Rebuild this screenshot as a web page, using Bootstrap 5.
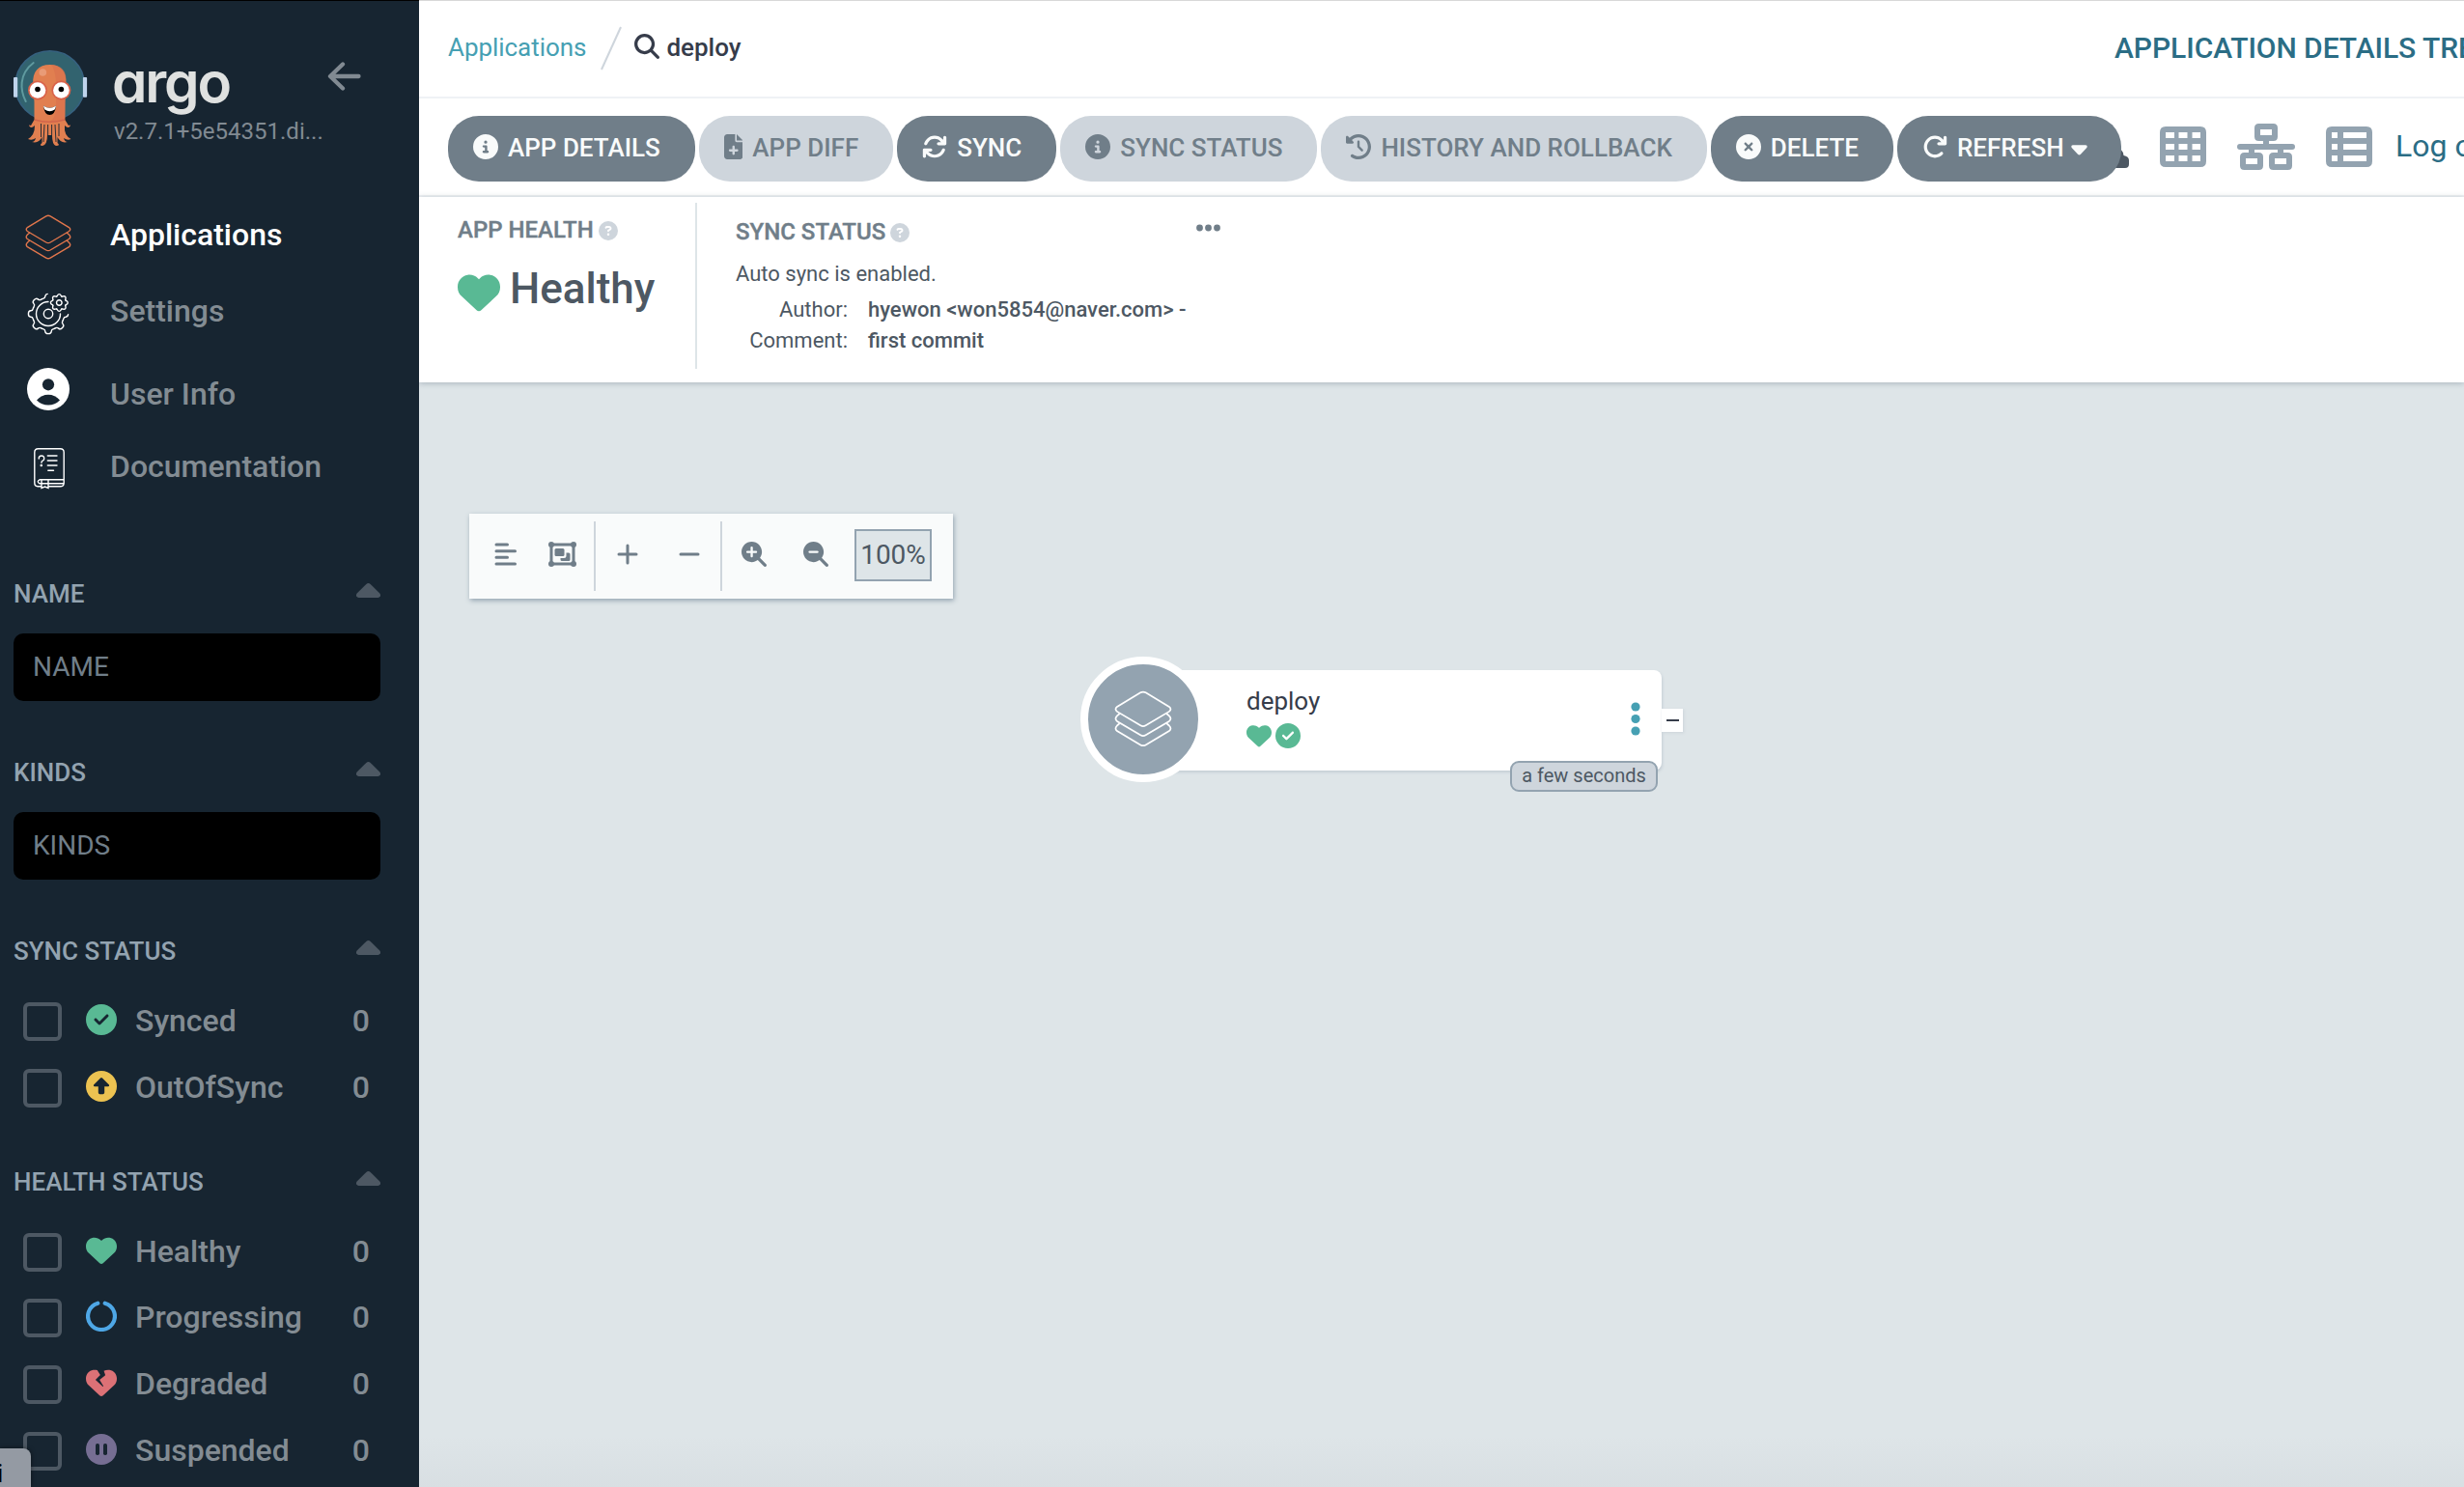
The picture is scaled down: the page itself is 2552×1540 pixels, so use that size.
<!DOCTYPE html>
<html lang="en">
<head>
<meta charset="utf-8">
<title>deploy - Argo CD</title>
<link href="https://cdn.jsdelivr.net/npm/bootstrap@5.3.0/dist/css/bootstrap.min.css" rel="stylesheet">
<style>
  body { font-family: Roboto, "Liberation Sans", sans-serif; font-size: 26px; color: #4d5863; background: #dee5e8; height: 1540px; overflow: hidden; }
  svg { display: block; flex: none; }

  /* sidebar */
  .side { width: 434px; height: 1540px; background: #172531; border-top: 1px solid #000; overflow: hidden; padding: 49px 40px 0 14px; }
  .brand-row { height: 154px; }
  .octo { margin-left: -1px; }
  .wordmark { font: 600 58.5px/60px Inter, sans-serif; font-feature-settings: "cv11" 1; letter-spacing: -2.2px; color: #dfe1e0; height: 60px; margin: 5px 0 0 25px; }
  .ver { font-size: 24px; line-height: 28px; color: #818a92; margin: 7px 0 0 27px; }
  .back { margin: 14px 0 0 4px; }
  .navi { font-size: 32px; font-weight: 500; line-height: 40px; color: #838c93; }
  .navi svg { margin-left: 12px; margin-right: 40px; }
  .navi.on { color: #fff; }
  .n1 { height: 79px; padding-bottom: 2px; } .n2 { height: 78px; } .n3 { height: 94px; } .n4 { height: 56px; padding-bottom: 1px; }
  .n1 svg { margin-top: 7px; } .n2 svg { margin-top: 6px; } .n3 svg { margin-top: -11px; } .n4 svg { margin-top: 5px; }
  .fspace { height: 84px; }
  .fhead { height: 40px; line-height: 40px; font-size: 26px; font-weight: 500; color: #93a3b0; }
  .fhead svg { margin-top: -7px; }
  .finput { height: 70px; border: 0; border-radius: 10px; background: #000; color: #707e89; font-size: 28px; line-height: 70px; padding: 0 20px; margin: 21px 0 54px; }
  .finput::placeholder { color: #707e89; opacity: 1; }
  .finput:focus { background: #000; color: #707e89; }
  .frow { height: 68px; font-size: 32px; font-weight: 500; color: #838c93; padding: 0 11px 2px 10px; }
  .frow .form-check-input { width: 40px; height: 40px; margin: 2px 0 0; border: 4px solid #4d5863; border-radius: 6px; background: transparent; flex: none; }
  .frow svg { margin: -2px 19px 0 25px; }
  .frow + .frow { margin-top: 1px; }
  .frow.tight { margin-top: 0; }
  .fhead + .frow { margin-top: 19px; }
  .frow + .fhead { margin-top: 43px; }

  /* top bars */
  .main { width: 2118px; height: 1540px; overflow: hidden; }
  .bar1 { height: 102px; background: #fff; border-top: 1px solid #d8d8d8; border-bottom: 2px solid #eff2f5; padding-left: 30px; }
  .crumbs { width: 1726px; flex: none; padding-bottom: 2px; }
  .crumbs a { color: #46a0b3; text-decoration: none; letter-spacing: -.05px; }
  .crumbs strong { font-weight: 500; color: #363c4a; }
  .slash { margin-left: 15px; }
  .find { margin: -4px 7px 0 13px; }
  .ttl { font-size: 30px; font-weight: 500; color: #2b6d85; white-space: nowrap; margin-top: -2px; letter-spacing: -.05px; }
  .bar2 { height: 102px; background: #fff; border-bottom: 2px solid #eff2f5; padding: 18px 0 0 30px; gap: 4px; }
  .pill { height: 68px; border-radius: 32px; border: 0; padding: 0 36px 2px 26px; font-size: 26px; font-weight: 500; background: #707e89; color: #f9fbfb; flex: none; gap: 10px; display: flex; align-items: center; white-space: nowrap; line-height: 66px; }
  .pill:disabled { background: #ced5dc; color: #707e89; opacity: 1; }
  .pill svg { margin-top: -2px; }
  .pill.front { z-index: 1; position: relative; padding-right: 36px; width: 232px; }
  .pill .caret { margin: 4px 0 0 -3px; }
  .views { gap: 32px; margin: -2px 0 0 -4px; height: 68px; }
  .views .who { margin: 15px 0 0 -34px; align-self: flex-start; }
  .logout { font-size: 32px; color: #2b6d85; text-decoration: none; white-space: nowrap; margin: -3px 0 0 -8px; }

  /* status panel */
  .status { height: 192px; background: #fff; box-shadow: 0 1px 6px rgba(70,90,105,.35); padding: 6px 0 0 40px; position: relative; z-index: 1; }
  .cap { font-size: 24px; font-weight: 500; line-height: 28px; color: #707e89; -webkit-text-stroke: .4px #707e89; gap: 5px; }
  .cap svg { margin-top: 2px; }
  .health { width: 248px; height: 172px; border-right: 2px solid #dee5e8; padding-top: 14px; }
  .big { font-size: 44px; font-weight: 500; line-height: 52px; gap: 10px; margin-top: 21px; }
  .big svg { margin-top: 8px; }
  .sync { width: 542px; padding: 16px 0 0 40px; font-size: 22px; line-height: 26px; }
  .sync b { font-weight: 500; }
  .sync .more { margin-top: -8px; }
  .auto { margin-top: 17px; }
  .author { margin-top: 11px; }
  .comment { margin-top: 6px; }
  .lbl { width: 116px; flex: none; text-align: right; margin-right: 21px; }

  /* resource graph */
  .graph { height: 1144px; position: relative; background: linear-gradient(to bottom, rgba(60,60,80,0) 1090px, rgba(60,60,80,.035)) #dee5e8; padding: 136px 0 0 52px; }
  .tools { width: 501px; height: 88px; background: #f9fbfb; box-shadow: 1px 2px 5px #93a3b0; color: #707e89; padding-left: 26px; }
  .tools svg { margin-top: -4px; }
  .vline { width: 2px; height: 72px; background: #ced5dc; }
  .zoomv { width: 80px; height: 54px; margin: -2px 0 0 27px; border: 2px solid #93a3b0; background: #dee5e8; font-size: 28px; line-height: 50px; color: #4d5863; }
  .nodebox { position: absolute; left: 750px; top: 298px; width: 537px; height: 104px; background: #fff; border-radius: 8px; box-shadow: 1px 2px 3px #c6cfd6; }
  .kind { position: absolute; left: -65px; top: -14px; width: 130px; height: 130px; border: 8px solid #fff; border-radius: 50%; background: #93a3b0; color: #fff; }
  .nname { padding: 15px 0 0 107px; line-height: 34px; color: #363c4a; }
  .nstat { padding: 6px 0 0 107px; gap: 4px; color: #59b994; }
  .dots { position: absolute; right: 22px; top: 33px; }
  .fold { position: absolute; left: 537px; top: 40px; width: 22px; height: 24px; background: #fff; box-shadow: 1px 1px 3px #ccd4da; }
  .fold span { width: 13px; height: 2px; background: #363c4a; }
  .age { position: absolute; right: 4px; top: 94px; width: 153px; height: 32px; border: 2px solid #93a3b0; border-radius: 9px; background: #ced5dc; font-size: 20px; line-height: 26px; text-align: center; color: #4d5863; white-space: nowrap; }
  .hint { position: absolute; left: 0; top: 1500px; width: 32px; height: 40px; background: #949aa3; border-top-right-radius: 8px; color: #000; font-size: 26px; line-height: 52px; overflow: hidden; box-shadow: 0 0 5px rgba(0,0,0,.5); }
  .hint span { margin-left: -3px; }
</style>
<script src="https://cdn.jsdelivr.net/npm/bootstrap@5.3.0/dist/js/bootstrap.bundle.min.js"></script>
</head>
<body>
<svg width="0" height="0" class="position-absolute">
  <defs>
    <symbol id="layers" viewBox="-1 -1 48.5 48.5"><g fill="none" stroke="currentColor" stroke-width="1.4" stroke-linecap="round"><path d="M21 .9Q23.2-.4 25.400 .9L45 12.700Q47.500 14.700 45 16.700L25.400 28.300Q23.200 29.600 21 28.300L1.400 16.700Q-1 14.700 1.400 12.700Z"/><path d="M3.600 18.400L1.400 20.300Q-1 22.800 1.400 24.800L21 36.400Q23.200 37.700 25.400 36.400L45 24.800Q47.500 22.800 45 20.300L42.800 18.400"/><path d="M3.600 26.600L1.400 28.500Q-1 31 1.400 33L21 44.600Q23.200 45.900 25.400 44.600L45 33Q47.500 31 45 28.500L42.800 26.600"/></g></symbol>
    <symbol id="info" viewBox="0 0 512 512"><path fill="currentColor" d="M256 512A256 256 0 1 0 256 0a256 256 0 1 0 0 512zM216 336h24V272H216c-13.300 0-24-10.700-24-24s10.700-24 24-24h48c13.300 0 24 10.700 24 24v88h8c13.300 0 24 10.700 24 24s-10.700 24-24 24H216c-13.300 0-24-10.700-24-24s10.700-24 24-24zm40-208a32 32 0 1 1 0 64 32 32 0 1 1 0-64z"/></symbol>
    <symbol id="check" viewBox="0 0 512 512"><path fill="currentColor" d="M256 512A256 256 0 1 0 256 0a256 256 0 1 0 0 512zM369 209L241 337c-9.400 9.400-24.600 9.400-33.900 0l-64-64c-9.400-9.400-9.400-24.600 0-33.900s24.600-9.400 33.900 0l47 47L335 175c9.400-9.400 24.600-9.400 33.900 0s9.400 24.600 0 33.900z"/></symbol>
    <symbol id="heart" viewBox="0 0 512 512"><path fill="currentColor" d="M47.600 300.400L228.300 469.100c7.500 7 17.400 10.900 27.700 10.900s20.200-3.900 27.700-10.900L464.400 300.400c30.400-28.300 47.600-68 47.600-109.500v-5.800c0-69.900-50.500-129.500-119.400-141C347 36.500 300.600 51.400 268 84L256 96 244 84c-32.600-32.600-79-47.500-124.600-39.900C50.500 55.600 0 115.200 0 185.100v5.800c0 41.500 17.200 81.200 47.600 109.500z"/></symbol>
    <symbol id="quest" viewBox="0 0 512 512"><circle cx="256" cy="256" r="256" fill="#ced5dc"/><path fill="#fff" d="M169.800 165.300c7.900-22.300 29.100-37.300 52.800-37.300h58.300c34.900 0 63.100 28.300 63.100 63.100c0 22.600-12.100 43.500-31.700 54.800L280 264.400c-.2 13-10.900 23.600-24 23.600c-13.300 0-24-10.700-24-24V250.500c0-8.600 4.600-16.500 12.100-20.800l44.300-25.400c4.700-2.700 7.600-7.700 7.600-13.100c0-8.400-6.800-15.100-15.100-15.100H222.600c-3.400 0-6.400 2.100-7.500 5.300l-.4 1.200c-4.400 12.500-18.200 19-30.600 14.600s-19-18.200-14.600-30.600l.4-1.200zM224 352a32 32 0 1 1 64 0 32 32 0 1 1-64 0z"/></symbol>
    <symbol id="up" viewBox="0 0 25 15"><path fill="#4d5863" d="M10.300 1.100Q12.500-.9 14.700 1.100L24.300 10.600Q25.500 12.200 24.800 13.600Q24 15 22.500 15H2.500Q1 15 .2 13.600Q-.5 12.200 .7 10.600Z"/></symbol>
    <symbol id="lens" viewBox="0 0 512 512"><path fill="currentColor" d="M416 208c0 45.900-14.900 88.300-40 122.700L502.600 457.400c12.500 12.500 12.500 32.800 0 45.300s-32.800 12.500-45.300 0L330.700 376c-34.400 25.200-76.800 40-122.700 40C93.100 416 0 322.900 0 208S93.100 0 208 0S416 93.100 416 208z"/></symbol>
    <path id="tooth" d="M-6.300-15.400C-4.600-16.300-3.300-15.500-3.200-18.200C-3.100-21.400 3.100-21.400 3.200-18.200C3.300-15.500 4.600-16.300 6.300-15.400"/>
    <path id="cog" d="M-2.700-6.500C-1.600-6.900-1.900-8.900 0-8.900S1.600-6.900 2.700-6.500"/>
  </defs>
</svg>
<div class="d-flex">
  <aside class="side flex-shrink-0">
    <div class="brand-row d-flex align-items-start">
      <svg class="octo" width="78" height="102" viewBox="0 0 78 102">
        <circle cx="38.700" cy="38.500" r="35.800" fill="#32636f" stroke="#36617f" stroke-width="1.600"/>
        <path d="M21.700 15C6 27 8 44 13.700 55" fill="none" stroke="#5f9a9f" stroke-width="2" stroke-linecap="round"/>
        <path d="M21.300 37C20.300 24 27 17 38.500 17S56.300 24 55.300 37L54.300 56V74L58 80Q60 79 60 80Q58 84 54 80Q53 90 60.500 94Q57 96 53 93Q54 97 57 97Q50 99 46.500 92V98Q50 101 45 101Q41 100 41 90H36Q36 100 31 101Q27 101 30.500 98V92Q27 99 20 97Q23 97 24 93Q20 96 16 94Q23 90 23 80Q19 84 17 80Q17 79 19 80L22.500 74V56Z" fill="#e17f50"/>
        <path d="M40 17C55 18 56.300 28 55.300 37L54.300 74Q46 77 38 76Q45 73 45 60V40Q45 22 40 17Z" fill="#d96f4c" opacity=".55"/>
        <path d="M23 74Q38 78.500 54 74" fill="none" stroke="#d2654b" stroke-width="1.500"/>
        <path d="M29.500 78V92M33 79L32 97M44 79L45 97M48 78V91M36.600 79V90M40.600 79V90" stroke="#172531" stroke-width=".9"/>
        <circle cx="31.300" cy="25" r="3.800" fill="#e99b77"/>
        <circle cx="26" cy="43.500" r="10" fill="#d9624a"/><circle cx="50.400" cy="43.500" r="10" fill="#d9624a"/>
        <circle cx="26" cy="43.500" r="8.300" fill="#fff"/><circle cx="50.400" cy="43.500" r="8.300" fill="#fff"/>
        <circle cx="26" cy="42.500" r="2.800"/><circle cx="50.400" cy="42.500" r="2.800"/>
        <path d="M32 59.500Q38.500 64 45 59.500Q44 69 38.500 69T32 59.500Z"/><path d="M32 59.500Q38.500 64 45 59.500Q44.500 62 43.600 63.500Q38.500 67 33.400 63.500Q32.500 62 32 59.500Z" fill="#fff"/>
        <rect x="1" y="30" width="4.200" height="20.700" rx="1" fill="#bfd4ec"/><rect x="72.900" y="30" width="4.200" height="20.700" rx="1" fill="#bfd4ec"/>
      </svg>
      <div>
        <div class="wordmark">argo</div>
        <div class="ver">v2.7.1+5e54351.di...</div>
      </div>
      <svg class="back" width="36" height="30" viewBox="0 0 36 30"><path d="M16 2.500L3 15L16 27.500M4 15H32.500" fill="none" stroke="#818a92" stroke-width="4.300" stroke-linecap="round" stroke-linejoin="round"/></svg>
    </div>
    <nav>
      <div class="navi on n1 d-flex align-items-center"><svg width="48" height="48" color="#e1764c"><use href="#layers"/></svg>Applications</div>
      <div class="navi n2 d-flex align-items-center">
        <svg width="48" height="48" viewBox="-24 -24 48 48"><g fill="none" stroke="#fff" stroke-width="1.400" stroke-linecap="round">
          <use href="#tooth" transform="rotate(135)"/><use href="#tooth" transform="rotate(180)"/><use href="#tooth" transform="rotate(225)"/><use href="#tooth" transform="rotate(270)"/><use href="#tooth" transform="rotate(315)"/>
          <path d="M-6.300-15.400C-4.600-16.300-3.300-15.500-3.200-18.200Q-2.600-20.400-.8-20.600"/><path d="M15.400 6.300C16.300 4.600 15.500 3.300 18.200 3.200Q20.400 2.600 20.600 .8"/>
          <path d="M0-12.500A12.500 12.500 0 1 0 12.500 0"/><circle r="4.700"/>
          <g transform="translate(11.300 -11.500)"><use href="#cog"/><use href="#cog" transform="rotate(45)"/><use href="#cog" transform="rotate(90)"/><use href="#cog" transform="rotate(135)"/><use href="#cog" transform="rotate(180)"/><use href="#cog" transform="rotate(225)"/><use href="#cog" transform="rotate(270)"/><use href="#cog" transform="rotate(315)"/><circle r="2.800"/></g>
        </g></svg>Settings</div>
      <div class="navi n3 d-flex align-items-center">
        <svg width="48" height="48" viewBox="-24 -24 48 48"><circle r="22" fill="#fff"/><circle cy="-4.700" r="6.100" fill="#172531"/><path d="M-12 11.500Q-7 5.700 0 5.700T12 11.500Q7 16.500 0 16.500T-12 11.500Z" fill="#172531"/></svg>User Info</div>
      <div class="navi n4 d-flex align-items-center">
        <svg width="48" height="48" viewBox="-24 -24 48 48"><g fill="none" stroke="#fff" stroke-width="1.400" stroke-linecap="round"><path d="M-7.500 18.800H-11Q-14.200 18.600-14.200 15V-16.500Q-14.200-20.300-10.500-20.300H12.500Q16.200-20.300 16.200-16.500V15.500Q16 18.800 12.500 18.800H.5M16 11.800H-9Q-12.500 13.500-9 15.800H15.500M-7 12V20.500L-3.500 19L0 20.500V12"/><path d="M-.7-13H9M-.7-8H9M-.7-3H9M-.2 2.200H5.500M-9.800-10Q-9.800-13-7-13T-4.300-10Q-4.300-8.500-5.800-7.800T-7-5.800"/></g><circle cx="-7.200" cy="-3" r="1.300" fill="#fff"/></svg>Documentation</div>
    </nav>
    <div class="fspace"></div>
    <div class="fhead d-flex justify-content-between align-items-center">NAME<svg width="25" height="15"><use href="#up"/></svg></div>
    <input class="finput form-control" placeholder="NAME">
    <div class="fhead d-flex justify-content-between align-items-center">KINDS<svg width="25" height="15"><use href="#up"/></svg></div>
    <input class="finput form-control" placeholder="KINDS">
    <div class="fhead d-flex justify-content-between align-items-center">SYNC STATUS<svg width="25" height="15"><use href="#up"/></svg></div>
    <div class="frow d-flex align-items-center"><input type="checkbox" class="form-check-input"><svg width="32" height="32" color="#59b994"><use href="#check"/></svg>Synced<span class="ms-auto">0</span></div>
    <div class="frow d-flex align-items-center"><input type="checkbox" class="form-check-input"><svg width="32" height="32" viewBox="0 0 32 32"><circle cx="16" cy="16" r="16" fill="#ecc251"/><path fill="#172531" d="M15 7.500Q16 6.600 17 7.500L24 14.500Q24.600 16 23 16.300H19.200V22.500Q19.100 24.300 17.500 24.300H14.500Q12.900 24.300 12.800 22.500V16.300H9Q7.400 16 8 14.500Z"/></svg>OutOfSync<span class="ms-auto">0</span></div>
    <div class="fhead d-flex justify-content-between align-items-center">HEALTH STATUS<svg width="25" height="15"><use href="#up"/></svg></div>
    <div class="frow d-flex align-items-center"><input type="checkbox" class="form-check-input"><svg width="32" height="32" color="#59b994"><use href="#heart"/></svg>Healthy<span class="ms-auto">0</span></div>
    <div class="frow tight d-flex align-items-center"><input type="checkbox" class="form-check-input"><svg width="32" height="32" viewBox="0 0 32 32"><path d="M19.700 2.700A13.900 13.900 0 1 1 12.300 2.700" fill="none" stroke="#4ea7e6" stroke-width="4.200" stroke-linecap="round"/></svg>Progressing<span class="ms-auto">0</span></div>
    <div class="frow d-flex align-items-center"><input type="checkbox" class="form-check-input"><svg width="32" height="32" viewBox="0 0 512 512"><path fill="#dc7176" d="M119.400 44.100c23.300-3.900 46.800-1.900 68.600 5.300l49.800 77.500-75.400 75.400c-1.500 1.500-2.400 3.600-2.300 5.800s1 4.200 2.600 5.700l112 104c2.900 2.700 7.400 2.900 10.500 .3s3.800-7 1.700-10.400l-60.400-98.100 90.700-75.600c2.600-2.100 3.500-5.700 2.400-8.800L296.800 61.800c28.500-16.700 62.400-23.200 95.700-17.600C461.500 55.600 512 115.200 512 185.100v5.800c0 41.500-17.200 81.200-47.600 109.500L283.700 469.100c-7.500 7-17.400 10.900-27.700 10.900s-20.200-3.900-27.700-10.900L47.600 300.400C17.200 272.100 0 232.400 0 190.900v-5.800c0-69.900 50.500-129.500 119.400-141z"/></svg>Degraded<span class="ms-auto">0</span></div>
    <div class="frow d-flex align-items-center"><input type="checkbox" class="form-check-input"><svg width="32" height="32" viewBox="0 0 32 32"><circle cx="16" cy="16" r="16" fill="#766e93"/><rect x="10" y="10" width="4" height="12" rx="1.800" fill="#172531"/><rect x="18" y="10" width="4" height="12" rx="1.800" fill="#172531"/></svg>Suspended<span class="ms-auto">0</span></div>
  </aside>

  <main class="main">
    <div class="bar1 d-flex align-items-center">
      <div class="crumbs d-flex align-items-center">
        <a href="#">Applications</a>
        <svg class="slash" width="22" height="46" viewBox="0 0 22 46"><path d="M1 45L21 1" stroke="#ced5dc" stroke-width="2"/></svg>
        <svg class="find" width="26" height="26" viewBox="0 0 512 512" fill="#363c4a"><path d="M416 208c0 45.900-14.900 88.300-40 122.700L502.600 457.400c12.500 12.500 12.500 32.800 0 45.300s-32.800 12.500-45.300 0L330.700 376c-34.400 25.200-76.800 40-122.700 40C93.100 416 0 322.900 0 208S93.100 0 208 0S416 93.100 416 208zM208 352a144 144 0 1 0 0-288 144 144 0 1 0 0 288z"/></svg>
        <strong>deploy</strong>
      </div>
      <div class="ttl">APPLICATION DETAILS TREE</div>
    </div>
    <div class="bar2 d-flex">
      <button class="pill btn"><svg width="26" height="26"><use href="#info"/></svg>APP DETAILS</button>
      <button class="pill btn" disabled><svg width="19.500" height="26" viewBox="0 0 384 512"><path fill="currentColor" fill-rule="evenodd" d="M64 0C28.700 0 0 28.700 0 64V448c0 35.300 28.700 64 64 64H320c35.300 0 64-28.700 64-64V160H256c-17.700 0-32-14.300-32-32V0H64zM256 0V128H384L256 0zM168 400v-48h-48c-13.300 0-24-10.700-24-24s10.700-24 24-24h48v-48c0-13.300 10.700-24 24-24s24 10.700 24 24v48h48c13.300 0 24 10.700 24 24s-10.700 24-24 24h-48v48c0 13.300-10.700 24-24 24s-24-10.700-24-24z"/></svg>APP DIFF</button>
      <button class="pill btn"><svg width="26" height="26" viewBox="0 0 512 512"><path fill="currentColor" d="M105.100 202.600c7.700-21.800 20.200-42.300 37.800-59.800c62.500-62.500 163.800-62.500 226.300 0L386.300 160H336c-17.700 0-32 14.300-32 32s14.300 32 32 32H463.900c17.700 0 32-14.300 32-32V64c0-17.700-14.300-32-32-32s-32 14.300-32 32v51.200L414.400 97.600c-87.500-87.500-229.300-87.500-316.800 0C73.200 122 55.600 150.700 44.800 181.400c-5.900 16.700 2.900 34.900 19.500 40.800s34.900-2.900 40.800-19.500zM39 289.300c-5 1.500-9.800 4.200-13.700 8.200c-4 4-6.700 8.800-8.100 14c-.3 1.200-.6 2.500-.8 3.800c-.3 1.700-.4 3.400-.4 5.100V448c0 17.700 14.300 32 32 32s32-14.300 32-32V396.900l17.600 17.500c87.500 87.400 229.300 87.400 316.700 0c24.400-24.400 42.100-53.100 52.900-83.700c5.900-16.700-2.900-34.900-19.500-40.800s-34.900 2.900-40.800 19.500c-7.700 21.800-20.200 42.300-37.800 59.800c-62.500 62.500-163.800 62.500-226.300 0l-.1-.1L125.600 352H176c17.700 0 32-14.300 32-32s-14.300-32-32-32H48.400c-1.600 0-3.200 .1-4.800 .3s-3.100 .5-4.600 1z"/></svg>SYNC</button>
      <button class="pill btn" disabled><svg width="26" height="26"><use href="#info"/></svg>SYNC STATUS</button>
      <button class="pill btn" disabled><svg width="26" height="26" viewBox="0 0 512 512"><path fill="currentColor" d="M75 75L41 41C25.900 25.900 0 36.600 0 57.900V168c0 13.300 10.700 24 24 24H134.100c21.400 0 32.100-25.900 17-41l-30.800-30.800C155 85.500 203 64 256 64c106 0 192 86 192 192s-86 192-192 192c-40.800 0-78.600-12.700-109.700-34.400c-14.500-10.100-34.400-6.600-44.600 7.900s-6.600 34.400 7.900 44.600C151.200 495 201.700 512 256 512c141.400 0 256-114.600 256-256S397.400 0 256 0C185.300 0 121.300 28.700 75 75zm181 53c-13.300 0-24 10.700-24 24V256c0 6.400 2.500 12.500 7 17l72 72c9.400 9.400 24.600 9.400 33.900 0s9.400-24.600 0-33.900l-65-65V152c0-13.300-10.700-24-24-24z"/></svg>HISTORY AND ROLLBACK</button>
      <button class="pill btn"><svg width="26" height="26" viewBox="0 0 512 512"><path fill="currentColor" d="M256 512A256 256 0 1 0 256 0a256 256 0 1 0 0 512zM175 175c9.400-9.400 24.600-9.400 33.900 0l47 47 47-47c9.400-9.400 24.600-9.400 33.900 0s9.400 24.600 0 33.900l-47 47 47 47c9.400 9.400 9.400 24.600 0 33.900s-24.600 9.400-33.900 0l-47-47-47 47c-9.400 9.400-24.600 9.400-33.900 0s-9.400-24.600 0-33.900l47-47-47-47c-9.400-9.400-9.400-24.600 0-33.900z"/></svg>DELETE</button>
      <button class="pill btn front"><svg width="26" height="26" viewBox="0 0 512 512"><path fill="currentColor" d="M386.300 160H336c-17.700 0-32 14.300-32 32s14.300 32 32 32H464c17.700 0 32-14.300 32-32V64c0-17.700-14.300-32-32-32s-32 14.300-32 32v51.200L414.400 97.600c-87.500-87.500-229.300-87.500-316.800 0s-87.500 229.300 0 316.800s229.300 87.500 316.800 0c12.500-12.500 12.500-32.800 0-45.300s-32.800-12.500-45.300 0c-62.500 62.500-163.800 62.500-226.300 0s-62.500-163.800 0-226.300s163.800-62.500 226.300 0L386.300 160z"/></svg><span>REFRESH</span><svg class="caret" width="17" height="11" viewBox="0 0 17 11"><path fill="currentColor" d="M1.800 .3H15.200Q17.600 .8 16.300 3L10 9.800Q8.500 11.200 7 9.800L.7 3Q-.6 .8 1.800 .3Z"/></svg></button>
      <div class="views d-flex align-items-center">
        <svg class="who" width="42" height="42" viewBox="0 0 42 42" fill="#4d5863"><circle cx="21" cy="10" r="10"/><path d="M6 30Q7 20 14 20H28Q36 21 36.500 28Q42 29 42 33V37Q42 41 38 41H4Q0 41 0 37Q2 33 6 30Z"/></svg>
        <svg width="48" height="42" viewBox="0 0 48 42"><path fill="#93a3b0" fill-rule="evenodd" d="M6 0H42Q48 0 48 6V36Q48 42 42 42H6Q0 42 0 36V6Q0 0 6 0ZM6 6V12H15V6ZM19.500 6V12H28.500V6ZM33.500 6V12H42V6ZM6 18V24H15V18ZM19.500 18V24H28.500V18ZM33.500 18V24H42V18ZM6 30V36H15V30ZM19.500 30V36H28.500V30ZM33.500 30V36H42V30Z"/></svg>
        <svg width="60" height="48" viewBox="0 0 60 48"><path fill="#93a3b0" fill-rule="evenodd" d="M22.500 0H37.500Q42 0 42 4.500V13.500Q42 18 37.500 18H33V21H57Q60 21 60 24T57 27H48V30H52.500Q57 30 57 34.500V43.500Q57 48 52.500 48H37.500Q33 48 33 43.500V34.500Q33 30 37.500 30H42V27H18V30H22.500Q27 30 27 34.500V43.500Q27 48 22.500 48H7.500Q3 48 3 43.500V34.500Q3 30 7.500 30H12V27H3Q0 27 0 24T3 21H27V18H22.500Q18 18 18 13.500V4.500Q18 0 22.500 0ZM24 6V12H36V6ZM9 36V42H21V36ZM39 36V42H51V36Z"/></svg>
        <svg width="48" height="42" viewBox="0 0 48 42"><path fill="#93a3b0" fill-rule="evenodd" d="M6 0H42Q48 0 48 6V36Q48 42 42 42H6Q0 42 0 36V6Q0 0 6 0ZM6 6V12H12V6ZM18 6V12H42V6ZM6 18V24H12V18ZM18 18V24H42V18ZM6 30V36H12V30ZM18 30V36H42V30Z"/></svg>
        <a class="logout" href="#">Log out</a>
      </div>
    </div>

    <section class="status d-flex">
      <div class="health flex-shrink-0">
        <div class="cap d-flex align-items-center">APP HEALTH<svg width="20" height="20"><use href="#quest"/></svg></div>
        <div class="big d-flex align-items-center"><svg width="44" height="44" color="#59b994"><use href="#heart"/></svg>Healthy</div>
      </div>
      <div class="sync">
        <div class="cap d-flex align-items-center">SYNC STATUS<svg width="20" height="20"><use href="#quest"/></svg>
          <svg class="more ms-auto" width="25" height="8" viewBox="0 0 25 8" fill="#707e89"><circle cx="3.500" cy="4" r="3.400"/><circle cx="12.500" cy="4" r="3.400"/><circle cx="21.500" cy="4" r="3.400"/></svg></div>
        <div class="auto">Auto sync is enabled.</div>
        <div class="author d-flex text-nowrap"><span class="lbl">Author:</span><b>hyewon &lt;won5854@naver.com&gt; -</b></div>
        <div class="comment d-flex text-nowrap"><span class="lbl">Comment:</span><b>first commit</b></div>
      </div>
    </section>

    <section class="graph">
      <div class="tools d-flex align-items-center">
        <svg width="24" height="24" viewBox="0 0 24 24" stroke="currentColor" stroke-width="3" stroke-linecap="round"><path d="M2 2H13.500M2 8.700H21.500M2 15.300H13.500M2 22H21.500"/></svg>
        <svg width="29" height="26" viewBox="0 0 29 26" style="margin-left:32px"><rect x="3" y="3" width="23" height="20" fill="none" stroke="currentColor" stroke-width="3"/><g fill="currentColor"><circle cx="3" cy="3" r="3"/><circle cx="26" cy="3" r="3"/><circle cx="3" cy="23" r="3"/><circle cx="26" cy="23" r="3"/><rect x="6.500" y="7" width="10" height="8" rx="1.500"/><path d="M18.500 11.500H21Q22.500 11.500 22.500 13V18.500Q22.500 20 21 20H14Q12.500 20 12.500 18.500V17H16Q18.500 17 18.500 14.500Z"/></g></svg>
        <div class="vline" style="margin:0 22px 0 18px"></div>
        <svg width="22" height="22" viewBox="0 0 22 22" stroke="currentColor" stroke-width="3" stroke-linecap="round"><path d="M2 11H20M11 2V20"/></svg>
        <svg width="22" height="22" viewBox="0 0 22 22" stroke="currentColor" stroke-width="3" stroke-linecap="round" style="margin-left:42px"><path d="M2 11H20"/></svg>
        <div class="vline" style="margin:0 20px 0 21px"></div>
        <svg width="26" height="26" viewBox="0 0 512 512"><use href="#lens" width="512" height="512"/><path d="M120 208H296M208 120V296" stroke="#f9fbfb" stroke-width="46" stroke-linecap="round"/></svg>
        <svg width="26" height="26" viewBox="0 0 512 512" style="margin-left:38px"><use href="#lens" width="512" height="512"/><path d="M130 208H286" stroke="#f9fbfb" stroke-width="46" stroke-linecap="round"/></svg>
        <div class="zoomv text-center">100%</div>
      </div>

      <div class="nodebox">
        <div class="kind d-flex align-items-center justify-content-center"><svg width="60" height="60"><use href="#layers"/></svg></div>
        <div class="nname">deploy</div>
        <div class="nstat d-flex align-items-center"><svg width="26" height="26"><use href="#heart"/></svg><svg width="26" height="26" viewBox="0 0 26 26"><circle cx="13" cy="13" r="12" fill="#fff"/><use href="#check" width="26" height="26"/></svg></div>
        <svg class="dots" width="10" height="36" viewBox="0 0 10 36" fill="#46a0b3"><circle cx="5" cy="5" r="4.600"/><circle cx="5" cy="17.500" r="4.600"/><circle cx="5" cy="30" r="4.600"/></svg>
        <div class="fold d-flex align-items-center justify-content-center"><span></span></div>
        <div class="age">a few seconds</div>
      </div>
    </section>
  </main>
</div>
<div class="hint"><span>i</span></div>
</body>
</html>
